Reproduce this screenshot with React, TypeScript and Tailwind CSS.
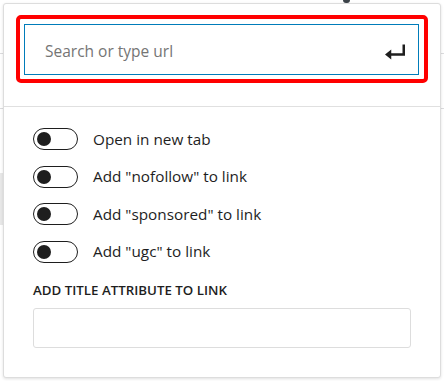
import { useState } from "react"

function Toggle({ label }: { label: string }) {
    const [on, setOn] = useState(false)
    return (
        <label className="flex items-center gap-[15px] h-[22px] cursor-pointer">
            <button
                type="button"
                onClick={() => setOn(!on)}
                className={`relative w-[45px] h-[22px] rounded-full border-[1.5px] border-[#1e1e1e] shrink-0 ${on ? 'bg-[#1e1e1e]' : 'bg-white'}`}
            >
                <span className={`absolute top-1/2 -translate-y-1/2 w-[14px] h-[14px] rounded-full ${on ? 'right-[3px] bg-white' : 'left-[3px] bg-[#1e1e1e]'}`} />
            </button>
            <span className="text-[15.3px] text-[#1e1e1e]">{label}</span>
        </label>
    )
}

export default function App() {
    return (
        <div className="relative w-[444px] h-[381px] bg-white overflow-hidden" style={{ fontFamily: '"Open Sans", "Noto Sans", sans-serif' }}>
            {/* page behind the popover */}
            <div className="absolute left-0 top-[53px] w-full h-px bg-[#dcdcde]" />
            <div className="absolute left-0 top-[108px] w-full h-px bg-[#dcdcde]" />
            <div className="absolute left-0 top-[173px] w-[3px] h-[52px] bg-[#e8e8e8]" />
            <div className="absolute left-[343px] top-0 w-[7px] h-[3px] rounded-b-full bg-[#3c434a]" />

            {/* link popover */}
            <div className="absolute left-[3px] top-[3px] w-[438px] h-[375px] bg-white border border-[#dddddd] rounded-[3px] shadow-[0_1px_3px_rgba(0,0,0,0.12)] flex flex-col">
                <div className="pt-[11px] px-[12px] pb-[23px]">
                    <div className="border-4 border-[#ff0000] rounded-[5px] pt-[5px] pb-[4px] pl-[4px] pr-[5px]">
                        <div className="h-[51px] border border-[#007cba] flex items-center pl-[20px] pr-[8px] pt-[4px]">
                            <input
                                type="text"
                                placeholder="Search or type url"
                                className="flex-1 text-[15.5px] text-[#1e1e1e] placeholder:text-[#757575] outline-none bg-transparent"
                            />
                            <svg width="30" height="30" viewBox="-2 -2 24 24" className="text-[#1e1e1e]">
                                <path d="M16 4h2v9H7v3l-5-4 5-4v3h9V4z" fill="currentColor" />
                            </svg>
                        </div>
                    </div>
                </div>

                <div className="border-t border-[#e0e0e0] px-[29px] pt-[21px] flex flex-col">
                    <div className="flex flex-col gap-[15.5px]">
                        <Toggle label="Open in new tab" />
                        <Toggle label={'Add "nofollow" to link'} />
                        <Toggle label={'Add "sponsored" to link'} />
                        <Toggle label={'Add "ugc" to link'} />
                    </div>
                    <div className="mt-[21px] text-[13.3px] font-semibold uppercase text-[#1e1e1e] leading-none">
                        Add title attribute to link
                    </div>
                    <input
                        type="text"
                        className="mt-[11px] w-[378px] h-[40px] border border-[#dddddd] rounded-[3px] outline-none px-3 text-[15px]"
                    />
                </div>
            </div>
        </div>
    )
}
